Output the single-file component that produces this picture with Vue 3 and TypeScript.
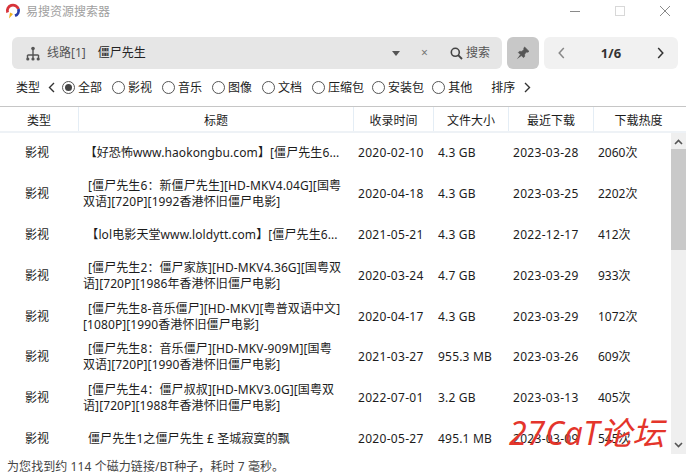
<script setup lang="ts">
interface Row { title: string; date: string; size: string; last: string; heat: string; left: boolean }
const types = ['全部', '影视', '音乐', '图像', '文档', '压缩包', '安装包', '其他']
const rows: Row[] = [
  { title: '【好恐怖www.haokongbu.com】[僵尸先生6...', left: false, date: '2020-02-10', size: '4.3 GB', last: '2023-03-28', heat: '2060次' },
  { title: '[僵尸先生6：新僵尸先生][HD-MKV4.04G][国粤双语][720P][1992香港怀旧僵尸电影]', left: true, date: '2020-04-18', size: '4.3 GB', last: '2023-03-25', heat: '2202次' },
  { title: '【lol电影天堂www.loldytt.com】[僵尸先生6...', left: false, date: '2021-05-21', size: '4.3 GB', last: '2022-12-17', heat: '412次' },
  { title: '[僵尸先生2：僵尸家族][HD-MKV4.36G][国粤双语][720P][1986年香港怀旧僵尸电影]', left: true, date: '2020-03-24', size: '4.7 GB', last: '2023-03-29', heat: '933次' },
  { title: '[僵尸先生8-音乐僵尸][HD-MKV][粤普双语中文][1080P][1990香港怀旧僵尸电影]', left: true, date: '2020-04-17', size: '4.3 GB', last: '2023-03-29', heat: '1072次' },
  { title: '[僵尸先生8：音乐僵尸][HD-MKV-909M][国粤\n双语][720P][1990香港怀旧僵尸电影]', left: true, date: '2021-03-27', size: '955.3 MB', last: '2023-03-26', heat: '609次' },
  { title: '[僵尸先生4：僵尸叔叔][HD-MKV3.0G][国粤双语][720P][1988年香港怀旧僵尸电影]', left: true, date: '2022-07-01', size: '3.2 GB', last: '2023-03-13', heat: '405次' },
  { title: '僵尸先生1之僵尸先生 £ 圣城寂寞的飘', left: true, date: '2020-05-27', size: '495.1 MB', last: '2023-03-09', heat: '545次' }
]
</script>

<template>
  <div class="app">
    <header class="titlebar">
      <svg class="logo" width="16" height="16" viewBox="0 0 16 16">
        <path d="M2.6 9.5 A5.6 5.6 0 0 1 13.4 6" fill="none" stroke="#d8343a" stroke-width="2.8" />
        <path d="M13.4 6 A5.6 5.6 0 0 1 10 12.8" fill="none" stroke="#2b3fa8" stroke-width="2.8" />
        <path d="M5 9.5 L8 11 L4 15.5 Z" fill="#f2b21c" />
      </svg>
      <span class="app-name">易搜资源搜索器</span>
      <div class="win-btns">
        <svg width="12" height="12" viewBox="0 0 12 12"><path d="M1 6.5H11" stroke="#8a8a8a" /></svg>
        <svg width="12" height="12" viewBox="0 0 12 12"><rect x="1.5" y="1.5" width="9" height="9" fill="none" stroke="#d8d8d8" /></svg>
        <svg width="12" height="12" viewBox="0 0 12 12"><path d="M1 1L11 11M11 1L1 11" stroke="#8a8a8a" /></svg>
      </div>
    </header>

    <section class="toolbar">
      <div class="search">
        <svg class="route" width="14" height="15" viewBox="0 0 14 15">
          <path d="M7 3V9M1.5 9H12.5" stroke="#555" stroke-width="1.4" fill="none" />
          <path d="M7 9V12M1.5 9V12M12.5 9V12" stroke="#555" stroke-width="1.4" fill="none" />
          <circle cx="7" cy="2.5" r="1.8" fill="#555" />
          <circle cx="1.8" cy="13" r="1.6" fill="#555" />
          <circle cx="7" cy="13" r="1.6" fill="#555" />
          <circle cx="12.2" cy="13" r="1.6" fill="#555" />
        </svg>
        <span class="line">线路[1]</span>
        <span class="query">僵尸先生</span>
        <span class="caret"></span>
        <span class="clear">×</span>
        <svg width="13" height="13" viewBox="0 0 13 13">
          <circle cx="5.3" cy="5.3" r="4" fill="none" stroke="#444" stroke-width="1.6" />
          <path d="M8.2 8.2L12 12" stroke="#444" stroke-width="1.9" />
        </svg>
        <span class="go">搜索</span>
      </div>
      <button class="pin" type="button" aria-label="pin">
        <svg width="14" height="14" viewBox="0 0 14 14">
          <path d="M8.6 1L13 5.4L11.6 6.2L10.4 6L8.6 8.2L8.6 10.6L7.4 11.6L2.4 6.6L3.4 5.4L5.8 5.4L8 3.6L7.8 2.4Z" fill="#555" stroke="#555" stroke-width="0.7" stroke-linejoin="round" />
          <path d="M4.2 8.4L0.8 13.2L5.6 9.8Z" fill="#555" />
        </svg>
      </button>
      <div class="pager">
        <svg width="7" height="12" viewBox="0 0 7 12"><path d="M5.8 1L1.2 6L5.8 11" fill="none" stroke="#888" stroke-width="1.5" /></svg>
        <span class="pages">1/6</span>
        <svg width="7" height="12" viewBox="0 0 7 12"><path d="M1.2 1L5.8 6L1.2 11" fill="none" stroke="#333" stroke-width="1.5" /></svg>
      </div>
    </section>

    <section class="filters">
      <span class="flabel">类型</span>
      <svg class="chev" width="7" height="11" viewBox="0 0 7 11"><path d="M6 1L1.5 5.5L6 10" fill="none" stroke="#333" stroke-width="1.4" /></svg>
      <label v-for="(t, i) in types" :key="t" class="radio" :class="{ long: t.length > 2 }">
        <span class="dot" :class="{ on: i === 0 }"></span>{{ t }}
      </label>
      <span class="flabel sort">排序</span>
      <svg class="chev end" width="7" height="11" viewBox="0 0 7 11"><path d="M1 1L5.5 5.5L1 10" fill="none" stroke="#333" stroke-width="1.4" /></svg>
    </section>

    <section class="table">
      <div class="thead">
        <span class="c1">类型</span>
        <span class="c2">标题</span>
        <span class="c3">收录时间</span>
        <span class="c4">文件大小</span>
        <span class="c5">最近下载</span>
        <span class="c6">下载热度</span>
      </div>
      <div class="tbody">
        <div class="rows">
          <div v-for="r in rows" :key="r.date + r.heat" class="row">
            <span class="c1">影视</span>
            <span class="c2 title" :class="{ left: r.left }">{{ r.title }}</span>
            <span class="c3">{{ r.date }}</span>
            <span class="c4">{{ r.size }}</span>
            <span class="c5">{{ r.last }}</span>
            <span class="c6">{{ r.heat }}</span>
          </div>
        </div>
        <div class="scrollbar">
          <svg width="9" height="6" viewBox="0 0 9 6"><path d="M1 5L4.5 1.5L8 5" fill="none" stroke="#555" stroke-width="1.6" /></svg>
          <div class="thumb"></div>
          <svg class="down" width="9" height="6" viewBox="0 0 9 6"><path d="M1 1L4.5 4.5L8 1" fill="none" stroke="#555" stroke-width="1.6" /></svg>
        </div>
      </div>
    </section>

    <footer class="status">为您找到约 114 个磁力链接/BT种子，耗时 7 毫秒。</footer>
    <div class="watermark">27CaT论坛</div>
  </div>
</template>

<style>
html, body { margin: 0; background: #fff; }
</style>

<style scoped>
.app {
  position: relative;
  width: 686px;
  height: 474px;
  overflow: hidden;
  background: #fff;
  color: #1c1c1c;
  font: 12px/16px "Noto Sans", "Noto Sans CJK SC", sans-serif;
}
.titlebar { display: flex; align-items: center; height: 24px; padding-left: 5px; }
.logo { margin-right: 5px; margin-top: -2px; }
.app-name { color: #a0a0a0; font-size: 12px; }
.win-btns { display: flex; gap: 33px; margin-left: auto; padding-right: 15px; margin-top: -2px; }

.toolbar { display: flex; gap: 5px; height: 32px; margin: 13px 7px 0 12px; }
.search {
  display: flex; align-items: center; width: 490px; padding: 0 12px 0 14px;
  box-sizing: border-box; background: #e6e6e6; border-radius: 6px;
}
.line { margin-left: 7px; color: #555; }
.query { margin-left: 12px; color: #222; flex: 1; }
.caret { width: 0; height: 0; border: 4px solid transparent; border-top: 5px solid #555; border-bottom: 0; margin-right: 21px; }
.clear { color: #777; margin-right: 22px; }
.go { margin-left: 3px; color: #555; }
.pin {
  display: flex; align-items: center; justify-content: center; width: 32px; height: 32px;
  padding: 0; border: 0; border-radius: 6px; background: #c8c8c8;
}
.pager {
  display: flex; align-items: center; justify-content: space-between; width: 134px; padding: 0 14px 0 14px;
  box-sizing: border-box; background: #f1f1f1; border-radius: 6px;
}
.pages { font-weight: 700; font-size: 13px; color: #333; }

.filters { display: flex; align-items: center; height: 37px; padding-left: 16px; box-sizing: border-box; white-space: nowrap; }
.chev { margin: 0 7px 0 8px; flex: none; }
.radio { display: flex; align-items: center; gap: 3px; margin-right: 10px; }
.radio.long { margin-right: 8px; }
.dot {
  position: relative; width: 11px; height: 11px; border: 1px solid #555; border-radius: 50%; flex: none;
}
.dot.on::after {
  content: ""; position: absolute; inset: 2px; border-radius: 50%; background: #444;
}
.sort { margin-left: 9px; }
.chev.end { margin-left: 9px; }

.table { border-top: 1px solid #c6c6c6; }
.thead, .row { display: grid; grid-template-columns: 78px 275px 80px 75px 85px 78px; }
.thead { height: 24px; border-bottom: 2px solid #eef2f6; }
.thead span { text-align: center; border-left: 1px solid #e4edf5; line-height: 27px; height: 24px; }
.thead .c1 { border-left: 0; }
.thead .c6 { padding-left: 12px; }
.tbody { display: flex; height: 327px; }
.rows { width: 671px; }
.row { height: 40.8px; align-items: center; }
.row .c1 { text-align: center; padding-right: 4px; }
.title { width: 268px; text-align: center; justify-self: start; overflow: hidden; white-space: nowrap; letter-spacing: 0.1px; }
.title.left { white-space: pre-line; text-align: left; text-indent: 5px; margin-left: 5px; width: 263px; }
.row .c3, .row .c4, .row .c5, .row .c6 { padding-left: 5px; }
.row .c3, .row .c5 { letter-spacing: 0.3px; }
.row .c4 { letter-spacing: 0.2px; }

.scrollbar {
  display: flex; flex-direction: column; align-items: center; width: 15px; height: 321px; background: #efefef;
}
.scrollbar svg { margin-top: 6px; margin-bottom: 4px; flex: none; }
.thumb { width: 15px; height: 101px; background: #c9c9c9; flex: none; }
.scrollbar .down { margin-top: auto; margin-bottom: 6px; }

.status { padding-left: 7px; line-height: 14px; color: #444; letter-spacing: 0.08px; }
.watermark {
  position: absolute; left: 509px; top: 413px;
  color: #e4352b; font: italic 400 32px/40px "Noto Sans", "Noto Sans CJK SC", sans-serif;
  white-space: nowrap; letter-spacing: 0.5px;
}
</style>
